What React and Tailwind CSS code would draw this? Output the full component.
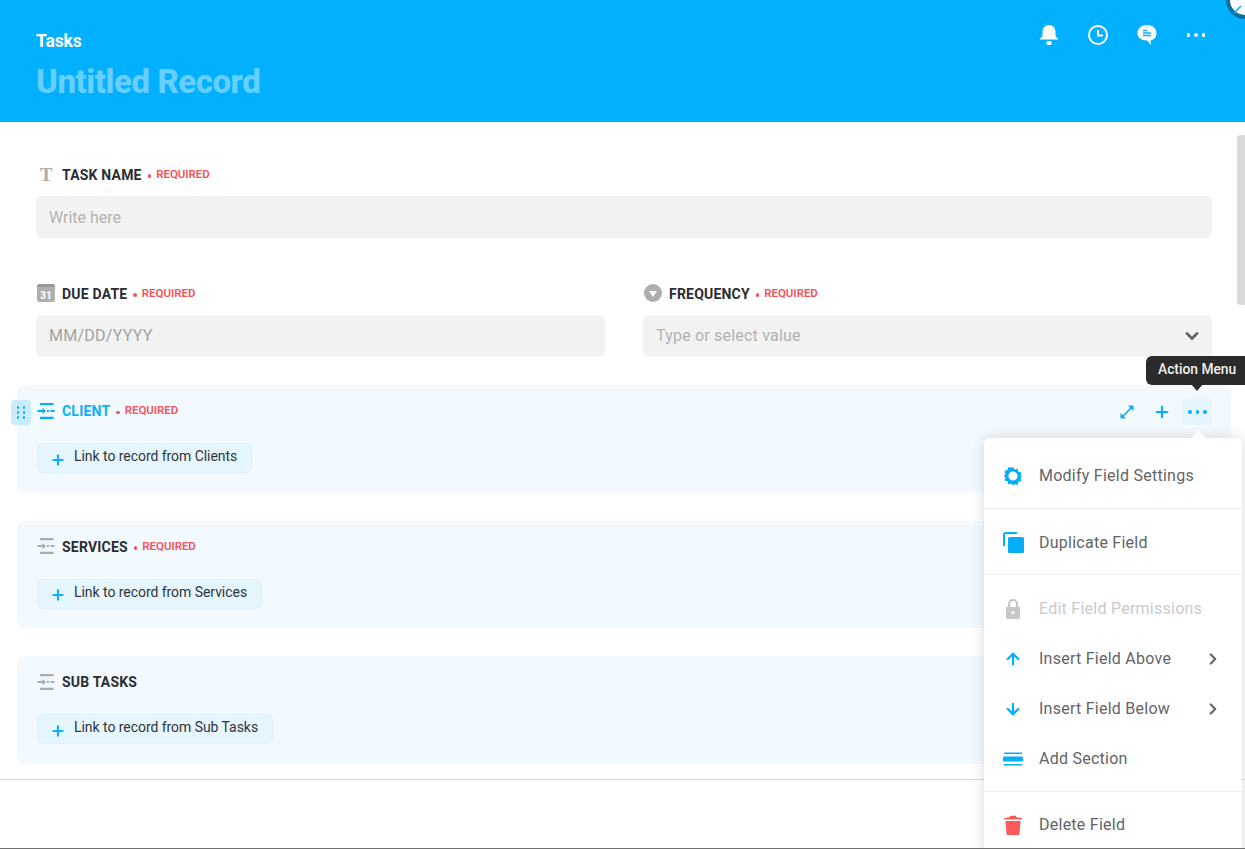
import { ChevronDown, ChevronRight, Plus, ArrowUp, ArrowDown } from 'lucide-react'

function Req() {
  return (
    <>
      <span className="w-[3.5px] h-[3.5px] rounded-full bg-[#f2545b] ml-[6px] mt-[4px]" />
      <span className="ml-[5px] mt-[1px] text-[11.5px] font-semibold text-[#f2545b] tracking-[-0.05px]">REQUIRED</span>
    </>
  )
}

function Label({ icon, text, required, color = 'text-[#2a2d32]', className = '' }) {
  return (
    <div className={`flex items-center h-5 ${className}`}>
      <div className="w-[20px] flex justify-center">{icon}</div>
      <span className={`ml-1.5 mt-[1px] text-sm font-bold tracking-[0.2px] ${color}`}>{text}</span>
      {required && <Req />}
    </div>
  )
}

function Sliders({ color = '#a9abae' }) {
  return (
    <svg width="18" height="16" viewBox="0 0 18 16">
      <path d="M3 1.2h13.500M.5 8H6M10 8h2M13.500 8h4M3 14.800h13.500" stroke={color} strokeWidth="2.200" fill="none" />
      <path d="M5.500 4.800 9 8l-3.500 3.200z" fill={color} />
    </svg>
  )
}

function LinkField({ label, required, active, button, width }) {
  return (
    <div className="relative rounded-lg bg-[#f2faff] h-[107.5px] pl-[20px] pr-5 pt-[15.5px]">
      {active && (
        <div className="absolute left-[-6px] top-[15px] w-5 h-[25px] rounded-sm bg-[#c9ecfd] grid grid-cols-2 place-items-center px-[4px] py-[5px]">
          {[0, 1, 2, 3, 4, 5].map(i => <span key={i} className="w-[2.500px] h-[2.500px] rounded-full bg-[#11aef5]" />)}
        </div>
      )}
      <Label
        className="-ml-[1px]"
        icon={<Sliders color={active ? '#06aef8' : '#a9abae'} />}
        text={label}
        required={required}
        color={active ? 'text-[#0fb0f5]' : 'text-[#2a2d32]'}
      />
      <div className={`mt-[22.5px] h-[30px] flex items-center rounded-md border border-[#dcf1fc] bg-[#e6f6fe] pl-[12px] ${width}`}>
        <Plus size={16} strokeWidth={3.200} className="text-[#0fb0f5] mt-[3px]" />
        <span className="ml-[8px] text-sm text-[#2f343a] -mt-[4px] -tracking-[0.05px]">{button}</span>
      </div>
      {active && (
        <div className="absolute top-[14px] right-[19px] flex items-center text-[#06aef8]">
          <svg width="18" height="18" viewBox="0 0 18 18" className="mr-[17px]">
            <path d="M4.500 13.500 13.500 4.500" stroke="currentColor" strokeWidth="1.600" />
            <path d="M10 2.500h5.500V8zM2.500 10v5.500H8z" fill="currentColor" />
          </svg>
          <Plus size={18} strokeWidth={2.900} className="mr-[12px]" />
          <div className="w-[29px] h-[26px] rounded-sm bg-[#e4f5fe] flex items-center justify-center gap-[4px]">
            <span className="w-[3.500px] h-[3.500px] rounded-full bg-current" />
            <span className="w-[3.500px] h-[3.500px] rounded-full bg-current" />
            <span className="w-[3.500px] h-[3.500px] rounded-full bg-current" />
          </div>
        </div>
      )}
    </div>
  )
}

function MenuItem({ icon, text, disabled, arrow, className = 'h-[50px]' }) {
  return (
    <div className={`flex items-center pl-[18px] pr-[20px] ${className}`}>
      <div className="w-[22px] flex justify-center">{icon}</div>
      <span className={`ml-[15px] text-base tracking-[0.25px] flex-1 ${disabled ? 'text-[#c9cacc]' : 'text-[#636467]'}`}>{text}</span>
      {arrow && <ChevronRight size={18} strokeWidth={3} className="text-[#66686b]" />}
    </div>
  )
}

function ActionMenu() {
  return (
    <div className="absolute left-[984px] top-[438px] w-[258px] h-[420px] rounded-md bg-white shadow-[0_0_14px_rgba(0,0,0,0.14)]">
      <span className="absolute right-[38px] -top-[5px] w-[11px] h-[11px] bg-white rotate-45" />
      <MenuItem
        className="h-[71px] pt-[6px] border-b border-[#eeeeee] relative"
        text="Modify Field Settings"
        icon={
          <svg width="20" height="20" viewBox="0 0 24 24" fill="#06aef8">
            <path fillRule="evenodd" d="M12 1l2 3.200 3.700-1 .7 3.700 3.700.9-1 3.700L23 12l-1.900 2.500 1 3.700-3.700.9-.7 3.700-3.700-1L12 23l-2-2.100-3.700 1-.7-3.700-3.700-.9 1-3.700L1 12l1.900-2.500-1-3.700 3.700-.9.7-3.700 3.700 1zM12 6.500a5.500 5.500 0 1 0 0 11 5.500 5.500 0 0 0 0-11z" />
          </svg>
        }
      />
      <MenuItem
        className="h-[66px] pt-[2px] border-b border-[#eeeeee]"
        text="Duplicate Field"
        icon={
          <svg width="21" height="21" viewBox="0 0 21 21">
            <path d="M1 14V3a2 2 0 0 1 2-2h11" stroke="#06aef8" strokeWidth="2" fill="none" />
            <rect x="5" y="5" width="16" height="16" rx="1.500" fill="#06aef8" />
          </svg>
        }
      />
      <MenuItem
        className="h-[66px] pt-[1px]"
        disabled
        text="Edit Field Permissions"
        icon={
          <svg width="16" height="20" viewBox="0 0 16 20">
            <path d="M4 9V5a4 4 0 0 1 8 0v4" stroke="#c5c7c9" strokeWidth="2.200" fill="none" />
            <path fillRule="evenodd" d="M1 8h14v11a1 1 0 0 1-1 1H2a1 1 0 0 1-1-1zM8 12a1.600 1.600 0 1 0 0 3.200A1.600 1.600 0 0 0 8 12z" fill="#c5c7c9" />
          </svg>
        }
      />
      <div className="-mt-[7px]">
        <MenuItem text="Insert Field Above" arrow icon={<ArrowUp size={18} strokeWidth={3} className="text-[#06aef8]" />} />
        <MenuItem text="Insert Field Below" arrow icon={<ArrowDown size={18} strokeWidth={3} className="text-[#06aef8]" />} />
        <MenuItem
          text="Add Section"
          className="h-[50px] border-b-0"
          icon={
            <svg width="20" height="16" viewBox="0 0 20 16" fill="#06aef8">
              <rect x="1" y="1.500" width="18" height="1.500" />
              <rect x="0" y="5.500" width="20" height="5" rx="1" />
              <rect x="1" y="13" width="18" height="1.500" />
            </svg>
          }
        />
      </div>
      <div className="mt-[7px] border-t border-[#eeeeee]">
        <MenuItem
          className="h-[66px]"
          text="Delete Field"
          icon={
            <svg width="18" height="20" viewBox="0 0 18 20" fill="#fb5a5c">
              <path d="M0 3.200 6 2V.8h6V2l6 1.200V4.500H0z" />
              <path d="M1.500 6h15l-1 13a1 1 0 0 1-1 1h-11a1 1 0 0 1-1-1z" />
            </svg>
          }
        />
      </div>
    </div>
  )
}

export default function App() {
  return (
    <div className="relative w-[1245px] h-[849px] overflow-hidden bg-white font-['Roboto',sans-serif] border-b border-[#6f7173]">
      <header className="h-[122px] bg-[#01b0ff] flex justify-between pl-9 pr-[39px] pt-[30px]">
        <div>
          <div className="text-[17.500px] font-bold leading-[22px] text-white -tracking-[0.1px]">Tasks</div>
          <div className="mt-[7px] text-[33px] font-extrabold leading-[46px] text-[#66cfff] -tracking-[0.45px]">Untitled Record</div>
        </div>
        <div className="flex items-start gap-[29px] -mt-[5px] h-5">
          <svg width="20" height="20" viewBox="0 0 20 20" fill="white">
            <path d="M10 0c4 0 6.500 3 6.500 7v4l3 3.500H.5l3-3.500V7c0-4 2.500-7 6.500-7z" />
            <rect x="7.500" y="16" width="5" height="4" rx="1.500" />
          </svg>
          <svg width="20" height="20" viewBox="0 0 20 20" fill="none" stroke="white" strokeWidth="2">
            <circle cx="10" cy="10" r="9" />
            <path d="M10 5v5.500h5" />
          </svg>
          <svg width="20" height="20" viewBox="0 0 20 20">
            <path d="M10 0c5.500 0 9.500 3.500 9.500 8s-3 7-6 7.500l.5 4.500-4-4.500C4 15.500.5 12.500.5 8S4.500 0 10 0z" fill="white" />
            <path d="M6 5.500h4M6 8h8M6 10.500h8" stroke="#01b0ff" strokeWidth="1.300" />
          </svg>
          <div className="w-5 h-5 flex items-center justify-center gap-[4px]">
            <span className="w-[3.500px] h-[3.500px] rounded-full bg-white" />
            <span className="w-[3.500px] h-[3.500px] rounded-full bg-white" />
            <span className="w-[3.500px] h-[3.500px] rounded-full bg-white" />
          </div>
        </div>
      </header>

      <div className="absolute left-[1226px] -top-[19px] w-[38px] h-[38px] rounded-full bg-white border-[4px] border-[#0f6f9f] flex items-center justify-center">
        <svg width="10" height="10" viewBox="0 0 10 10" className="mt-[18px] -ml-[14px]"><path d="M1 9 8 2" stroke="#06aef8" strokeWidth="1.500" /></svg>
      </div>

      <main className="pt-[42px]">
        <div className="pl-9 pr-[33px]">
          <Label
            text="TASK NAME"
            required
            icon={<span className="font-['Liberation_Serif',serif] font-bold text-[19px] leading-none text-[#a9abae]">T</span>}
          />
          <div className="mt-3 h-[42px] rounded-md bg-[#f2f2f2] flex items-center pl-[13px] pt-[2px] text-base text-[#b2b2b2]">Write here</div>

          <div className="mt-[45px] grid grid-cols-2 gap-[38px]">
            <div>
              <Label
                text="DUE DATE"
                required
                icon={
                  <div className="w-[18px] h-[18px] rounded-[2px] bg-[#b0b0b0] flex items-end justify-center pb-[1px] border-t-[3px] border-[#999999]">
                    <span className="text-[10px] leading-[11px] font-bold text-white">31</span>
                  </div>
                }
              />
              <div className="mt-3 h-[42px] rounded-md bg-[#f2f2f2] flex items-center pl-[13px] text-base tracking-[0.25px] text-[#a3a3a3]">MM/DD/YYYY</div>
            </div>
            <div>
              <Label
                text="FREQUENCY"
                required
                icon={
                  <div className="w-[18px] h-[18px] rounded-full bg-[#adadad] flex items-center justify-center">
                    <span className="w-0 h-0 mt-[2px] border-x-[4px] border-x-transparent border-t-[6px] border-t-white" />
                  </div>
                }
              />
              <div className="mt-3 h-[42px] rounded-md bg-[#f2f2f2] flex items-center justify-between pl-[13px] pr-[10px] text-base tracking-[0.2px] text-[#b2b2b2]">
                Type or select value
                <ChevronDown size={20} strokeWidth={3.400} className="text-[#66686b]" />
              </div>
            </div>
          </div>
        </div>

        <div className="ml-[17px] mr-[14px] mt-[28px] flex flex-col gap-7">
          <LinkField label="CLIENT" required active button="Link to record from Clients" width="w-[215px]" />
          <LinkField label="SERVICES" required button="Link to record from Services" width="w-[225px]" />
          <LinkField label="SUB TASKS" button="Link to record from Sub Tasks" width="w-[236px]" />
        </div>
        <div className="mt-[15px] border-t border-[#d9d9d9]" />
      </main>

      <div className="absolute right-0 top-[135px] w-2 h-[170px] rounded-l bg-[#d9d9d9]" />

      <div className="absolute left-[1146px] top-[356px] w-[110px] h-[29px] rounded-md bg-[#2b2b2b] flex items-center pl-3 pb-[2px] text-[13.800px] font-medium text-[#f0f0f0]">
        Action Menu
        <span className="absolute left-[45px] -bottom-[6px] w-0 h-0 border-x-[6px] border-x-transparent border-t-[7px] border-t-[#2b2b2b]" />
      </div>

      <ActionMenu />
    </div>
  )
}
